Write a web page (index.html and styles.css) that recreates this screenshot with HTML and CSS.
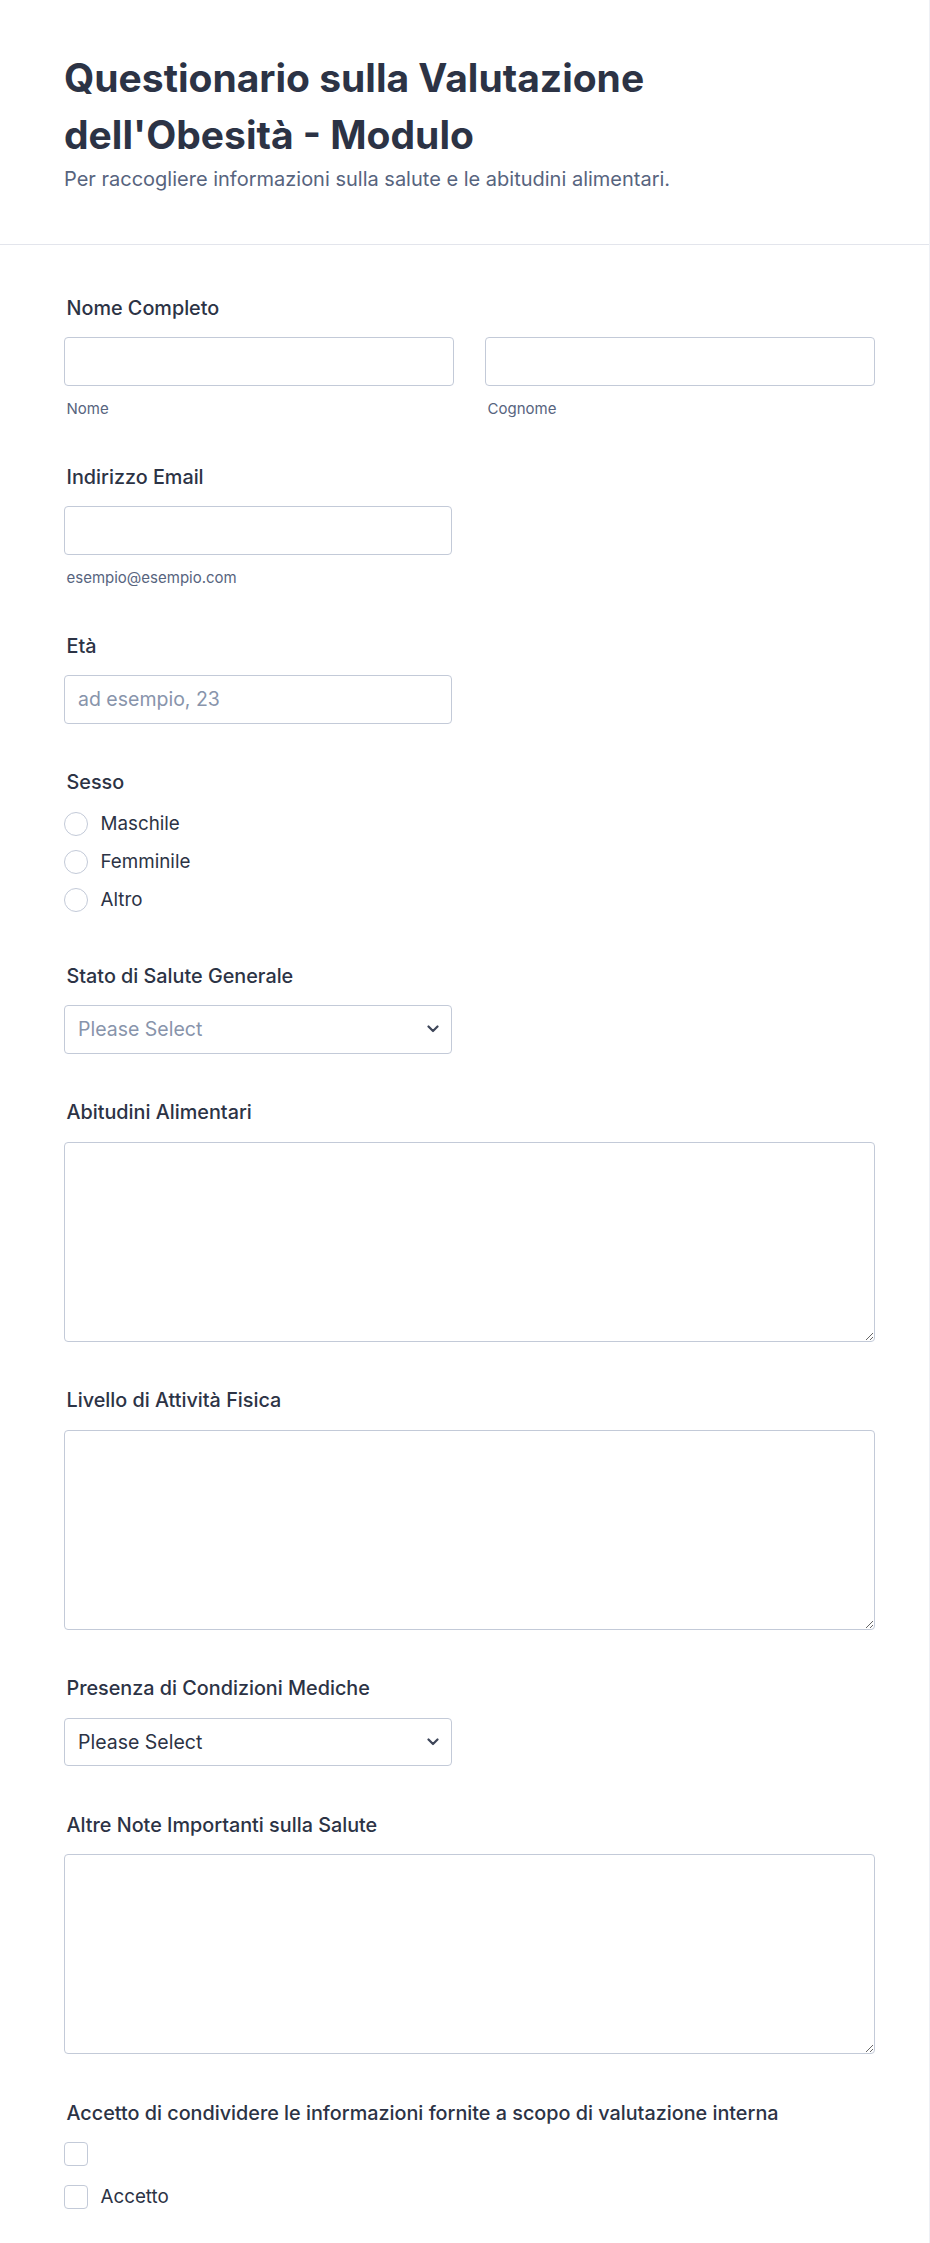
FILE: index.html
```html
<!DOCTYPE html>
<html lang="it">
<head>
<meta charset="utf-8">
<title>Questionario sulla Valutazione dell'Obesità - Modulo</title>
<link rel="stylesheet" href="styles.css">
</head>
<body>
<div class="page">
  <header class="form-header">
    <h1 class="form-title">Questionario sulla Valutazione dell'Obesità - Modulo</h1>
    <p class="form-subtitle">Per raccogliere informazioni sulla salute e le abitudini alimentari.</p>
  </header>

  <form class="form-body">
    <div class="field">
      <label class="field-label">Nome Completo</label>
      <div class="name-row">
        <div class="name-col">
          <input class="text-input" type="text">
          <span class="sublabel">Nome</span>
        </div>
        <div class="name-col">
          <input class="text-input" type="text">
          <span class="sublabel">Cognome</span>
        </div>
      </div>
    </div>

    <div class="field">
      <label class="field-label">Indirizzo Email</label>
      <div class="half">
        <input class="text-input" type="email">
        <span class="sublabel">esempio@esempio.com</span>
      </div>
    </div>

    <div class="field">
      <label class="field-label">Età</label>
      <div class="half">
        <input class="text-input" type="text" placeholder="ad esempio, 23">
      </div>
    </div>

    <div class="field field-radio">
      <label class="field-label">Sesso</label>
      <div class="option-list">
        <label class="option"><input class="radio" type="radio" name="sesso"><span>Maschile</span></label>
        <label class="option"><input class="radio" type="radio" name="sesso"><span>Femminile</span></label>
        <label class="option"><input class="radio" type="radio" name="sesso"><span>Altro</span></label>
      </div>
    </div>

    <div class="field">
      <label class="field-label">Stato di Salute Generale</label>
      <div class="half select-wrap">
        <select class="select is-placeholder">
          <option>Please Select</option>
        </select>
        <svg class="chevron" width="12" height="8" viewBox="0 0 12 8"><path d="M1.5 1.5 L6 6 L10.5 1.5" fill="none" stroke="#3e4659" stroke-width="2.2" stroke-linecap="round" stroke-linejoin="round"/></svg>
      </div>
    </div>

    <div class="field">
      <label class="field-label">Abitudini Alimentari</label>
      <textarea class="textarea"></textarea>
    </div>

    <div class="field">
      <label class="field-label">Livello di Attività Fisica</label>
      <textarea class="textarea"></textarea>
    </div>

    <div class="field">
      <label class="field-label">Presenza di Condizioni Mediche</label>
      <div class="half select-wrap">
        <select class="select">
          <option>Please Select</option>
        </select>
        <svg class="chevron" width="12" height="8" viewBox="0 0 12 8"><path d="M1.5 1.5 L6 6 L10.5 1.5" fill="none" stroke="#3e4659" stroke-width="2.2" stroke-linecap="round" stroke-linejoin="round"/></svg>
      </div>
    </div>

    <div class="field">
      <label class="field-label">Altre Note Importanti sulla Salute</label>
      <textarea class="textarea"></textarea>
    </div>

    <div class="field">
      <label class="field-label">Accetto di condividere le informazioni fornite a scopo di valutazione interna</label>
      <div class="option-list check-list">
        <label class="option"><input class="checkbox" type="checkbox"></label>
        <label class="option"><input class="checkbox" type="checkbox"><span>Accetto</span></label>
      </div>
    </div>
  </form>
</div>
</body>
</html>
```

FILE: styles.css
```css
* {
  box-sizing: border-box;
}

html, body {
  margin: 0;
  padding: 0;
  background: #ffffff;
}

body {
  font-family: Inter, "Noto Sans", "Liberation Sans", sans-serif;
  color: #2c3345;
}

.page {
  width: 930px;
  min-height: 2243px;
  border-right: 1px solid #eef0f5;
}

.form-header {
  padding: 49px 64px 51px 64px;
  border-bottom: 1px solid #e3e5ec;
}

.form-title {
  margin: 0;
  max-width: 720px;
  font-size: 39px;
  line-height: 57px;
  font-weight: 700;
  color: #2c3345;
  letter-spacing: 0;
}

.form-subtitle {
  margin: 2.5px 0 0 0;
  font-size: 20px;
  line-height: 27px;
  font-weight: 400;
  color: #57647e;
}

.form-body {
  width: 811px;
  margin-left: 64px;
  padding-top: 51px;
  display: flex;
  flex-direction: column;
  gap: 46.5px;
}

.field {
  display: flex;
  flex-direction: column;
}

.field-label {
  display: block;
  padding-left: 2.5px;
  font-size: 19.8px;
  line-height: 24px;
  font-weight: 500;
  color: #2c3345;
  margin-bottom: 17.5px;
}

.name-row {
  display: flex;
  gap: 31px;
}

.name-col {
  width: 390px;
  display: flex;
  flex-direction: column;
}

.half {
  width: 387.5px;
  display: flex;
  flex-direction: column;
}

.text-input,
.select,
.textarea {
  display: block;
  width: 100%;
  margin: 0;
  border: 1px solid #c3cad8;
  border-radius: 4px;
  background: #ffffff;
  font-family: Inter, "Noto Sans", "Liberation Sans", sans-serif;
  font-size: 19.5px;
  color: #2c3345;
  outline: none;
}

.text-input {
  height: 48.5px;
  padding: 0 13px;
}

.text-input::placeholder {
  color: #8894ab;
  opacity: 1;
}

.sublabel {
  display: block;
  margin-top: 14.5px;
  padding-left: 2.5px;
  font-size: 15px;
  line-height: 18px;
  color: #57647e;
}

.select-wrap {
  position: relative;
}

.select {
  height: 48.5px;
  padding: 0 40px 0 13px;
  appearance: none;
  -webkit-appearance: none;
}

.select.is-placeholder {
  color: #8894ab;
}

.chevron {
  position: absolute;
  right: 13px;
  top: 20px;
}

.textarea {
  height: 200px;
  padding: 10px 13px;
  resize: both;
}

.option-list {
  display: flex;
  flex-direction: column;
  gap: 14.3px;
}

.field-radio .option-list {
  padding-bottom: 5px;
}

.check-list {
  gap: 19.3px;
}

.option {
  display: flex;
  align-items: center;
  gap: 12.5px;
  height: 24px;
  font-size: 18.8px;
  line-height: 24px;
  color: #2c3345;
}

.radio,
.checkbox {
  appearance: none;
  -webkit-appearance: none;
  flex: 0 0 auto;
  width: 24px;
  height: 24px;
  margin: 0;
  border: 1px solid #c3cad8;
  background: #ffffff;
}

.radio {
  border-radius: 50%;
}

.checkbox {
  border-radius: 4px;
}
```
